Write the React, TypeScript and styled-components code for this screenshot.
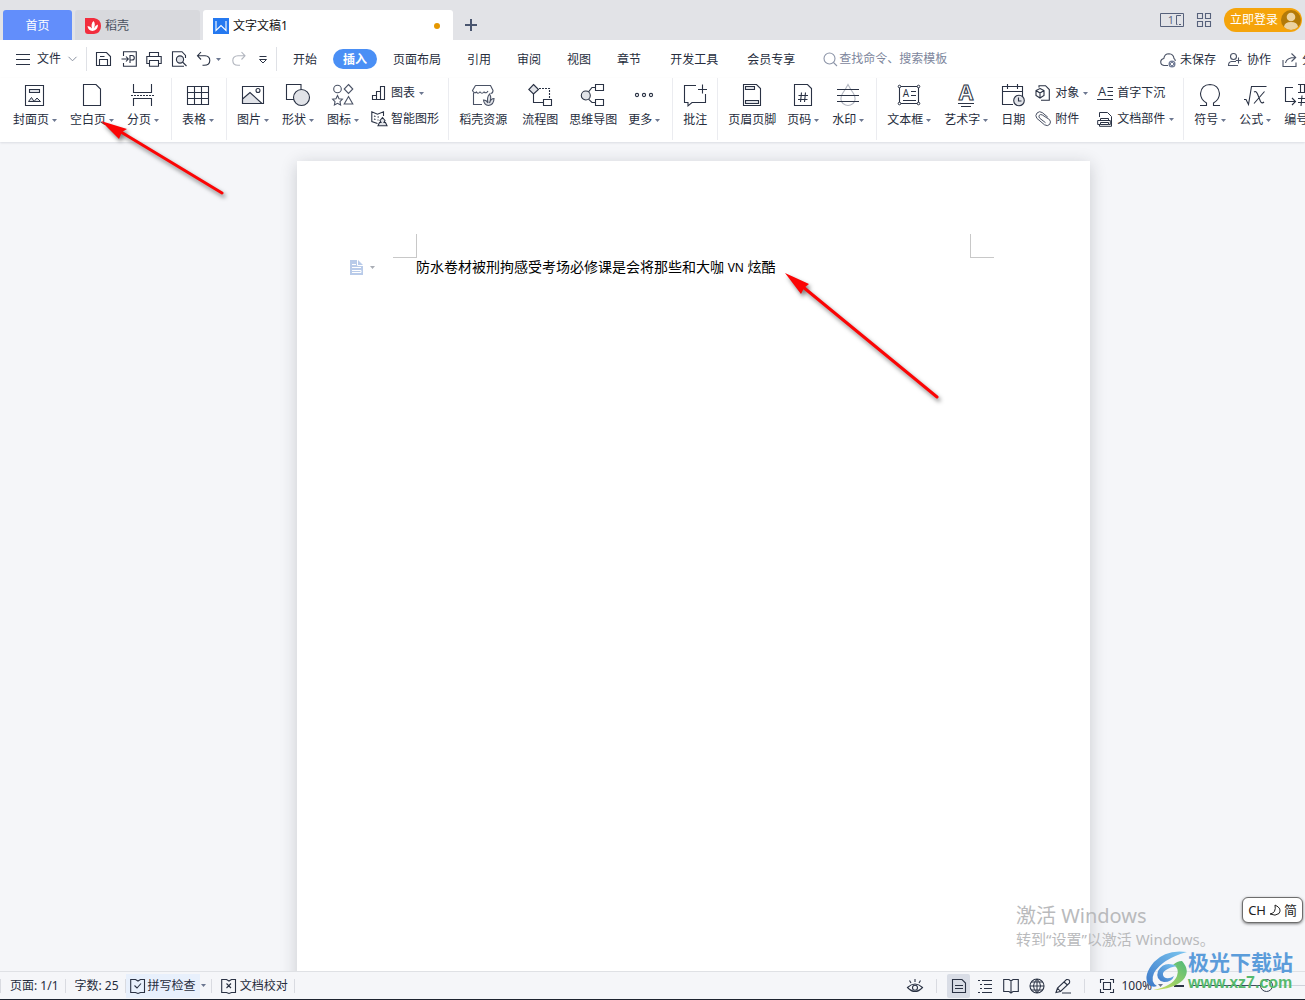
import React from 'react';
import styled, { createGlobalStyle, css } from 'styled-components';

const ink = '#2a3244';
const shade = '#e1e3e8';

const GlobalStyle = createGlobalStyle`
  *, *::before, *::after { box-sizing: border-box; }
  html, body { margin: 0; height: 100%; overflow: hidden; }
  body {
    font-family: "Noto Sans", "Noto Sans CJK SC", sans-serif;
    font-size: 12px;
    line-height: 16px;
    color: #262d3d;
  }
  button, input { font: inherit; color: inherit; }
  svg { display: block; flex: none; overflow: visible; }
`;

const Shell = styled.div`
  position: relative;
  display: flex;
  flex-direction: column;
  height: 100vh;
  overflow: hidden;
  background: #f5f6f9;
`;

const Plain = styled.button`
  display: flex;
  align-items: center;
  flex: none;
  padding: 0;
  border: 0;
  background: none;
  white-space: nowrap;
`;

/* ---------- title bar ---------- */

const TitleBar = styled.header`
  display: flex;
  align-items: flex-end;
  flex: none;
  height: 40px;
  padding: 0 3px;
  background: #e2e3e7;
`;

const DocTab = styled(Plain)<{ $kind: 'home' | 'idle' | 'active' }>`
  gap: 4px;
  height: 30px;
  margin-right: 3px;
  padding: 2px 10px 0;
  border-radius: 3px 3px 0 0;
  ${({ $kind }) =>
    $kind === 'home'
      ? css`width: 69px; justify-content: center; background: #628efb; color: #fff;`
      : $kind === 'idle'
        ? css`width: 125px; background: #d8d9dd; color: #4a5160;`
        : css`width: 250px; margin-right: 0; background: #fff; color: #111;`}
`;

const Unsaved = styled.span`
  width: 6px;
  height: 6px;
  margin: 0 3px 0 auto;
  border-radius: 50%;
  background: #e59700;
`;

const NewTab = styled(Plain)`
  height: 30px;
  padding: 0 12px;
`;

const TitleTools = styled.div`
  display: flex;
  align-items: center;
  gap: 12px;
  height: 40px;
  margin-left: auto;
`;

const Login = styled(Plain)`
  gap: 3px;
  height: 24px;
  padding: 0 1px 0 6px;
  border-radius: 12px;
  background: #f5a40b;
  color: #fff;
`;

/* ---------- menu row ---------- */

const MenuRow = styled.nav`
  display: flex;
  align-items: center;
  flex: none;
  height: 38px;
  padding-left: 16px;
  background: #fff;
`;

const FileButton = styled(Plain)`
  gap: 7px;
  margin-right: 9px;
`;

const MenuRule = styled.span`
  flex: none;
  width: 1px;
  height: 24px;
  background: #dfe1e6;
`;

const QuickTools = styled.div`
  display: flex;
  align-items: center;
  gap: 9px;
  padding: 0 5px 0 9px;
`;

const QuickButton = styled(Plain)`
  gap: 4px;
`;

const Tabs = styled.div<{ $gap: number }>`
  display: flex;
  flex: none;
  gap: ${({ $gap }) => $gap}px;
  padding-left: ${({ $gap }) => $gap}px;
`;

const MenuTab = styled(Plain)<{ $on?: boolean }>`
  height: 20px;
  padding: 2px 10px 0;
  border-radius: 10px;
  ${({ $on }) => $on && css`background: #4a8ff5; color: #fff; font-weight: 700;`}
`;

const Search = styled.label`
  display: flex;
  align-items: center;
  gap: 1px;
  flex: none;
  margin-left: 18px;
`;

const SearchInput = styled.input`
  width: 130px;
  padding: 0;
  border: 0;
  outline: 0;
  background: none;
  &::placeholder { color: #7d869c; opacity: 1; }
`;

const ShareTools = styled.div`
  display: flex;
  flex: none;
  gap: 11px;
  margin: 0 -21px 0 auto;
`;

const ShareButton = styled(Plain)`
  gap: 4px;
  padding-top: 2px;
`;

/* ---------- ribbon ---------- */

const Ribbon = styled.section`
  position: relative;
  display: flex;
  align-items: flex-start;
  gap: 11px;
  flex: none;
  height: 64px;
  padding-left: 13px;
  background: #fff;
  box-shadow: 0 1px 2px rgba(40, 50, 70, 0.12);
`;

const Tool = styled.button<{ $menu?: boolean; $lead?: boolean }>`
  display: flex;
  flex-direction: column;
  align-items: center;
  gap: 5px;
  flex: none;
  margin: 5px ${({ $menu }) => ($menu ? 2 : 0)}px 0 ${({ $lead }) => ($lead ? 4 : 0)}px;
  padding: 0;
  border: 0;
  background: none;
  white-space: nowrap;
`;

const ToolLabel = styled.span`
  display: flex;
  align-items: center;
  gap: 3px;
`;

const RibbonRule = styled.span`
  flex: none;
  width: 1px;
  height: 62px;
  margin: 0 -1px;
  background: #ebecf0;
`;

const ToolStack = styled.div`
  display: flex;
  flex-direction: column;
  align-items: flex-start;
  gap: 10px;
  flex: none;
  margin: 7px -1px 0;
`;

const SmallTool = styled(Plain)`
  gap: 4px;
`;

/* ---------- workspace ---------- */

const Workspace = styled.main`
  display: flex;
  justify-content: center;
  flex: 1;
  min-height: 0;
  padding: 19px 0 0 82px;
  overflow: hidden;
`;

const Page = styled.article`
  flex: none;
  width: 793px;
  height: 1122px;
  padding-top: 73px;
  background: #fff;
  box-shadow: 0 3px 16px rgba(30, 35, 45, 0.2);
`;

const MarginMarks = styled.div`
  display: flex;
  justify-content: space-between;
  padding: 0 96px;
`;

const Mark = styled.span<{ $side: 'left' | 'right' }>`
  width: 24px;
  height: 24px;
  border: 0 solid #c8c8c8;
  border-bottom-width: 1px;
  ${({ $side }) => ($side === 'left' ? css`border-right-width: 1px;` : css`border-left-width: 1px;`)}
`;

const Line = styled.div`
  display: grid;
  grid-template-columns: 66px 1fr;
  align-items: center;
  height: 18px;
  padding: 0 96px 0 53px;
`;

const ParagraphMenu = styled(Plain)`
  gap: 7px;
`;

const Paragraph = styled.p`
  margin: 0;
  font-size: 14px;
  line-height: 18px;
  color: #000;
`;

const Latin = styled.span`
  font-size: 12px;
`;

/* ---------- status bar ---------- */

const StatusBar = styled.footer`
  position: relative;
  display: flex;
  align-items: center;
  flex: none;
  height: 29px;
  border-top: 1px solid #dfe1e5;
  border-bottom: 1px solid #1d2430;
  background: #f5f6f9;
`;

const StatusRule = styled.span`
  flex: none;
  width: 1px;
  height: 14px;
  background: #d9dbe1;
`;

const StatusText = styled(Plain)`
  gap: 3px;
  padding: 0 6px 0 9px;
`;

const StatusTool = styled(Plain)`
  gap: 2px;
  height: 24px;
  padding: 0 4px;
  background: #e8f0fc;
`;

const StatusCaret = styled(Plain)`
  padding: 0 5px 0 1px;
`;

const ViewTools = styled.div`
  display: flex;
  align-items: center;
  gap: 3px;
  margin-left: auto;
`;

const ViewRule = styled(StatusRule)`
  margin: 0 7px;
`;

const ViewButton = styled(Plain)<{ $on?: boolean }>`
  justify-content: center;
  width: 23px;
  height: 24px;
  border-radius: 2px;
  background: ${({ $on }) => ($on ? '#d9dde6' : 'none')};
`;

const ZoomTools = styled.div`
  display: flex;
  align-items: center;
  gap: 7px;
  padding-left: 8px;
`;

const ZoomLevel = styled(Plain)`
  gap: 6px;
  margin-right: 4px;
`;

const ZoomSlider = styled.input`
  width: 114px;
  height: 14px;
  margin: 0;
  appearance: none;
  background: linear-gradient(90deg, #3f4a60 0 66%, #cfd3db 66% 100%) center / 100% 1px no-repeat;
  &::-webkit-slider-thumb {
    appearance: none;
    width: 13px;
    height: 13px;
    border: 1px solid #333c4e;
    border-radius: 50%;
    background: #f5f6f9;
  }
`;

/* ---------- floating layers ---------- */

const Arrows = styled.svg`
  position: absolute;
  top: 0;
  left: 0;
  pointer-events: none;
  filter: drop-shadow(2px 3px 2px rgba(0, 0, 0, 0.5));
`;

const Activation = styled.aside`
  position: absolute;
  right: 0;
  bottom: 50px;
  width: 289px;
  color: #b9babc;
  white-space: nowrap;
  pointer-events: none;
`;

const ActivationTitle = styled.div`
  font-size: 20px;
  line-height: 24px;
`;

const ActivationHint = styled.div`
  font-size: 15px;
  line-height: 22px;
`;

const InputBadge = styled.aside`
  position: absolute;
  right: 2px;
  bottom: 77px;
  display: flex;
  align-items: center;
  gap: 3px;
  height: 26px;
  padding: 0 5px;
  border: 1px solid #6d6d6d;
  border-radius: 6px;
  background: #fff;
  box-shadow: 0 1px 3px rgba(0, 0, 0, 0.5);
  color: #222;
  font-size: 13px;
`;

const SiteMark = styled.aside`
  position: absolute;
  right: 0;
  bottom: 8px;
  display: flex;
  align-items: center;
  gap: 1px;
  width: 159px;
  pointer-events: none;
`;

const SiteName = styled.div`
  color: #5b9cda;
  font-size: 21px;
  font-weight: 700;
  line-height: 24px;
`;

const SiteUrl = styled.div`
  color: #55b96d;
  font-family: "Liberation Sans", Arial, sans-serif;
  font-size: 16px;
  font-weight: 700;
  line-height: 18px;
`;

/* ---------- drawings ---------- */

type IconProps = { w?: number; h?: number; color?: string; box?: string; children: React.ReactNode };

const Icon = ({ w = 24, h = w, color = ink, box, children }: IconProps) => (
  <svg width={w} height={h} viewBox={box ?? `0 0 ${w} ${h}`} fill="none" stroke={color} strokeWidth="1.1" aria-hidden="true">
    {children}
  </svg>
);

const Caret = ({ color = '#6c7790' }: { color?: string }) => (
  <svg width="5" height="3" viewBox="0 0 5 3" aria-hidden="true"><path d="M0 0H5L2.5 3Z" fill={color} /></svg>
);

const letter = { fill: ink, stroke: 'none', fontFamily: 'Open Sans, sans-serif', textAnchor: 'middle' as const };

const icons = {
  cover: <Icon><path d="M2.5 2.5H20.5V22.5H2.5Z" /><path d="M6.5 6.5H16.5V9.5H6.5Z" fill={shade} /><path d="M5.5 18.5L8.5 14.5L11 18.5ZM11 18.5L14 15L17.5 18.5Z" fill={shade} strokeWidth="1" /></Icon>,
  blank: <Icon><path d="M3.5 1.5H16L20.5 6V22.5H3.5Z" /></Icon>,
  pageBreak: <Icon><path d="M2.5 1V9.5H20.5V1M2.5 23V15.5H20.5V23" /><path d="M0 12.5H24" strokeDasharray="2 1" /></Icon>,
  table: <Icon><path d="M1.5 3.5H22.5V21.5H1.5ZM1.5 9.5H22.5M1.5 15.5H22.5M8.5 3.5V21.5M15.5 3.5V21.5" /></Icon>,
  picture: <Icon><path d="M1.5 16L9 9.5L21 20.5H1.5Z" fill={shade} /><path d="M1.5 3.5H22.5V20.5H1.5Z" /><circle cx="17" cy="7.5" r="2" /></Icon>,
  shapes: <Icon><path d="M.5 1.5H15V16.5H.5Z" /><circle cx="15.5" cy="14.5" r="8" fill={shade} /></Icon>,
  symbols: <Icon color="#4a5265"><circle cx="6.5" cy="6" r="3.8" /><path d="M17.5 1.5L21.8 6L17.5 10.5L13.2 6Z" /><path d="M6.5 12.5L8 15.8L11.4 16.2L9 18.7L9.6 22L6.5 20.3L3.4 22L4 18.7L1.6 16.2L5 15.8Z" /><path d="M17.5 13.5L21.8 21H13.2Z" /></Icon>,
  chart: <Icon w={16}><path d="M1.5 10.5H5.5V14.5H1.5ZM5.5 6.5H9.5V14.5H5.5ZM9.5 1.5H13.5V14.5H9.5Z" /></Icon>,
  smart: <Icon w={16}><path d="M6.5 12.5L.8 10.5V.8L6.5 3.2L12.5 .8V5M3 5L4.5 5.5M3 8L4.5 8.5M6.5 6L8 6M6.5 9L7.5 9" /><path d="M7 14.8L8.5 11.5H10L9 9.5L11.5 6.5L14 9.5L13 11.5H14.5L16 14.8Z" fill={shade} /></Icon>,
  store: <Icon color="#4a5265"><path d="M2.5 10V21.5H11M4.5 2.5H19.5L22 7.5Q22 10.5 19.5 10.5M17 8Q15.5 11 13 9Q11 11.5 9 9Q7 11.5 5.5 9Q3 11 1.5 7.5L4.5 2.5" /><path d="M17.5 22.5Q13 22 12.5 17Q15.5 17 17 20Q15.5 14.5 18.5 11Q21 14.5 18.5 20Q20 15.5 23 15.5Q23 21.5 17.5 22.5Z" fill={shade} /></Icon>,
  flow: <Icon><path d="M5.5 1.5L10.5 6.5L5.5 11L.8 6.5Z" fill={shade} /><path d="M5.5 11V19.5H15.5M15.5 16.5H23.5V22.5H15.5Z" /><path d="M11 5.5H21.5V16" strokeDasharray="2 1" /></Icon>,
  mind: <Icon><circle cx="4.8" cy="12.5" r="4.5" fill={shade} /><path d="M14.5 1.5H22.5V7.5H14.5ZM14.5 16.5H22.5V22.5H14.5ZM14.5 4.5H11L7.5 8.8M14.5 19.5H11L7.5 16.2" /></Icon>,
  more: <Icon><circle cx="5" cy="12" r="1.6" /><circle cx="12" cy="12" r="1.6" /><circle cx="19" cy="12" r="1.6" /></Icon>,
  comment: <Icon><path d="M13 2.5H1.5V19.5H5V22.8L9 19.5H22.5V11M19.5 1.5V10.5M15 6.5H24" /></Icon>,
  header: <Icon><path d="M3.5 1.5H16.5L20.5 5.5V22.5H3.5Z" /><path d="M5.5 3.5H14.5V6.5H5.5ZM5.5 17.5H18.5V20.5H5.5Z" fill={shade} /></Icon>,
  number: <Icon><path d="M3.5 1.5H16.5L20.5 5.5V22.5H3.5Z" /><path d="M10.5 9.5L9.5 19M14.5 9.5L13.5 19M7.5 12.5H17M7 16.5H16.5" /></Icon>,
  water: <Icon><path d="M12 1.5Q14 5.5 17.5 10.5Q21 16.5 17 20.5Q12 24.5 7 20.5Q3 16.5 6.5 10.5Q10 5.5 12 1.5Z" stroke="#b4b8c2" /><path d="M1 6.5H23M1 12.5H23M1 18.5H23" /></Icon>,
  textBox: <Icon><path d="M2.5 3.5H21.5V20.5H2.5ZM14 8.5H19M14 12.5H19M6 17.5H19" /><g fill="#fff" strokeWidth="1"><circle cx="2.5" cy="3.5" r="1.3" /><circle cx="21.5" cy="3.5" r="1.3" /><circle cx="2.5" cy="20.5" r="1.3" /><circle cx="21.5" cy="20.5" r="1.3" /></g><text x="9" y="14" fontSize="10" {...letter}>A</text></Icon>,
  wordArt: <Icon><text x="12" y="17" fontSize="21" {...letter} fill="#fff" stroke={ink} strokeWidth="1" fontWeight="700">A</text><path d="M4 20.5H20M7 23.5H17" /></Icon>,
  date: <Icon><path d="M12 21.5H1.5V3.5H21.5V13M1.5 8.5H21.5M6.5 1V6M16.5 1V6" /><circle cx="18" cy="17.5" r="5.3" fill={shade} /><path d="M17.5 14.5V18H20.5" /></Icon>,
  object: <Icon w={16}><path d="M4 2.5V.7H10.5L14.3 4.5V15.3H6" /><path d="M5 3.5L9 5.5V10.5L5 13L1 10.5V5.5ZM1 5.5L5 8L9 5.5M5 8V13" /></Icon>,
  clip: <Icon w={16} color="#4a5265"><path d="M12.8 6.2L7.3 1.6Q4.5 -.4 2 2Q-.2 4.6 1.8 7.3L9.5 13.8Q12.5 15.7 14.7 13.4Q16.4 10.8 14.5 8.6L7.2 3.9Q5.3 3 4.2 4.4Q3.4 6 4.8 7.3L10.5 11.7" strokeWidth="1" /></Icon>,
  dropCap: <Icon w={16}><path d="M10.5 2.5H16M10.5 6.5H16M10.5 10.5H16M0 14.5H16" /><text x="5" y="11" fontSize="13" {...letter}>A</text></Icon>,
  parts: <Icon w={16}><path d="M2.5 6V1.5H10.5L14.5 5.5V15.3H2.5V13.5M3.5 9.5V7.5H11.5V9.5M.7 9.5H13.3V13.5H11.5M3.5 13.5H.7V9.5M3.5 11.5H11.5V13.5H3.5Z" strokeWidth="1" /></Icon>,
  omega: <Icon><path d="M2 22.5H8.5V20Q2.5 16.5 2.5 10.5Q3.5 1.7 12 1.5Q20.5 1.7 21.5 10.5Q21.5 16.5 15.5 20V22.5H22" /></Icon>,
  formula: <Icon><path d="M1 16.5H3L5.5 21.5L8.5 3.5H23.5M11 9Q13 7.5 14.5 11L17.5 18.5Q19 21 21 19M21.5 8.5L11 20.5" /></Icon>,
  numbering: <Icon w={32} h={24} box="0 4 32 24"><path d="M9 8.5H1.5V22.5H11M8 19L11.5 22.5L8 26M14 5.5H30M16.5 5.5V13.5M20.5 5.5V13.5M24.5 5.5V13.5M14 13.5H30M18 16.5L17 27M23 16.5L22 27M14 19.5H30M14 23.5H30" /></Icon>,
};

const Ic = {
  menu: <Icon w={14}><path d="M0 2.5H14M0 7.5H14M0 12.5H14" strokeWidth="1" /></Icon>,
  chevron: <Icon w={9} h={6} color="#8a91a0"><path d="M.5 .8L4.5 4.8L8.5 .8" strokeWidth="1" /></Icon>,
  save: <Icon w={16}><path d="M.5 1.5H10.5L14.5 5.5V14.5H.5ZM3.5 14V8.5H11.5V14M4 5.5H8.5" /></Icon>,
  pdf: <Icon w={16}><path d="M2.5 5V.7H15.3V15.3H2.5V12M.5 8H7M5 5.5L7.3 8L5 10.5M9 12V4.5H11Q13.3 4.5 13.3 7Q13.3 9 11 9H9" /></Icon>,
  print: <Icon w={16}><path d="M3.5 5V1.5H12.5V5M3.5 12.5H.8V5.5H15.2V12.5H12.5M3.5 9.5H12.5V15.3H3.5Z" /></Icon>,
  preview: <Icon w={16}><path d="M13 15.3H1.5V.7H11L14.5 4.5V7" /><circle cx="9" cy="8.5" r="3.6" fill={shade} /><path d="M11.5 11L15.5 15" /></Icon>,
  undo: <Icon w={16}><path d="M5 1L1.5 4.8L5 8.5M1.5 4.8H9Q13.8 5 13.8 9.5Q13.8 14.3 8 14.3H6.5" /></Icon>,
  redo: <Icon w={16} color="#b1b5be"><path d="M11.5 1L15 4.8L11.5 8.5M15 4.8H8Q2.8 5 2.8 9.5Q2.8 14.3 8 14.3H10" /></Icon>,
  custom: <Icon w={16}><path d="M4.5 5.5H11.5M4.5 8.5L8 12L11.5 8.5Z" strokeWidth="1" /></Icon>,
  search: <Icon w={15} color="#8d95a8"><circle cx="6.5" cy="6.5" r="5.5" /><path d="M10.5 10.5L14 14" /></Icon>,
  cloud: <Icon w={16} color="#4a5265"><path d="M8 13.5H4Q.7 13 .7 9.8Q.9 7 3.8 6.5Q4.5 1.7 9 1.7Q13.5 2 14 6.5Q15.3 7.3 15.3 9" /><circle cx="12" cy="12" r="3.5" fill="#737d97" stroke="none" /><path d="M10.5 10.5L13.5 13.5M13.5 10.5L10.5 13.5" stroke="#fff" strokeWidth="1" /></Icon>,
  collab: <Icon w={16} color="#4a5265"><circle cx="6.5" cy="4.5" r="3" /><path d="M9 9.5H4.5Q1.5 9.8 1.5 13.5H11M11.5 5.5V11.5M8.8 8.5H14.5" /></Icon>,
  share: <Icon w={16} color="#4a5265"><path d="M1 8V14.5H14V10.5M3.5 11Q4.5 5.5 13.5 5.5M9.5 1.5L13.7 5.5L9.5 9.5" /></Icon>,
  doc: <Icon w={13} h={15}><path d="M0 0H8L13 5V15H0Z" fill="#b9cbe9" stroke="none" /><path d="M7.5 0V5.5H13M2 4.5H6M2 7.5H11M2 10.5H11V12.5H2" stroke="#fff" strokeWidth="1" /></Icon>,
  spell: <Icon w={16}><path d="M.7 1.5H5.5L8 3L10.5 1.5H14.5V14.5H10.5L8 15.5L5.5 14.5H.7ZM4.5 7.5L7 10L11 5.5" /></Icon>,
  proof: <Icon w={16}><path d="M.7 1.5H5.5L8 3L10.5 1.5H14.5V14.5H10.5L8 15.5L5.5 14.5H.7ZM5.5 5.5L10 10M10 5.5L5.5 10" /></Icon>,
  eye: <Icon w={16}><path d="M.5 9.5Q8 2.5 15.5 9.5Q8 17.5 .5 9.5ZM8 1V4M2.5 2.5L4 5M13.5 2.5L12 5" /><circle cx="8" cy="9.8" r="2.5" /></Icon>,
  page: <Icon w={16}><path d="M1.5 1.5H11L14.5 5V14.5H1.5ZM4 7.5H12M4 10.5H12" /></Icon>,
  outline: <Icon w={16}><path d="M1 2.5H3M5 2.5H15M3 6.5H5M7 6.5H15M3 10.5H5M7 10.5H15M1 14.5H3M5 14.5H15" /></Icon>,
  book: <Icon w={16}><path d="M.7 1.5H6L8 3L10 1.5H15.3V13.5H10L8 15L6 13.5H.7ZM8 3V15" /></Icon>,
  globe: <Icon w={16}><circle cx="8" cy="8" r="7" /><path d="M1 8H15M8 1V15M2.5 4H13.5M2.5 12H13.5M8 1Q1 8 8 15M8 1Q15 8 8 15" strokeWidth="1" /></Icon>,
  pen: <Icon w={16}><path d="M1 14.5L2.5 10L11.5 1.5Q15.5 1 14.5 5L5.5 13.5ZM2.5 10L5.5 13.5M9 4L12.5 7M7 15H16" /></Icon>,
  fit: <Icon w={14}><path d="M.5 4V.5H4M10 .5H13.5V4M13.5 10V13.5H10M4 13.5H.5V10M3.5 3.5H10.5V10.5H3.5Z" /></Icon>,
  minus: <Icon w={10}><path d="M0 5H10" strokeWidth="2" /></Icon>,
};

type ToolSpec = { id: keyof typeof icons; label: string; menu?: boolean; lead?: boolean };

const RibbonTool = ({ id, label, menu, lead }: ToolSpec) => (
  <Tool $menu={menu} $lead={lead}>
    {icons[id]}
    <ToolLabel>{label}{menu && <Caret />}</ToolLabel>
  </Tool>
);

const RibbonStack = ({ items }: { items: ToolSpec[] }) => (
  <ToolStack>
    {items.map((t) => (
      <SmallTool key={t.id}>{icons[t.id]}{t.label}{t.menu && <Caret />}</SmallTool>
    ))}
  </ToolStack>
);

type Group = (ToolSpec | ToolSpec[])[];

const groups: Group[] = [
  [{ id: 'cover', label: '封面页', menu: true }, { id: 'blank', label: '空白页', menu: true }, { id: 'pageBreak', label: '分页', menu: true }],
  [{ id: 'table', label: '表格', menu: true }],
  [
    { id: 'picture', label: '图片', menu: true },
    { id: 'shapes', label: '形状', menu: true },
    { id: 'symbols', label: '图标', menu: true },
    [{ id: 'chart', label: '图表', menu: true }, { id: 'smart', label: '智能图形' }],
  ],
  [
    { id: 'store', label: '稻壳资源' },
    { id: 'flow', label: '流程图', lead: true },
    { id: 'mind', label: '思维导图' },
    { id: 'more', label: '更多', menu: true },
  ],
  [{ id: 'comment', label: '批注' }],
  [{ id: 'header', label: '页眉页脚' }, { id: 'number', label: '页码', menu: true }, { id: 'water', label: '水印', menu: true }],
  [
    { id: 'textBox', label: '文本框', menu: true },
    { id: 'wordArt', label: '艺术字', menu: true },
    { id: 'date', label: '日期' },
    [{ id: 'object', label: '对象', menu: true }, { id: 'clip', label: '附件' }],
    [{ id: 'dropCap', label: '首字下沉' }, { id: 'parts', label: '文档部件', menu: true }],
  ],
  [{ id: 'omega', label: '符号', menu: true }, { id: 'formula', label: '公式', menu: true }, { id: 'numbering', label: '编号', menu: true }],
];

const mainTabs = ['开始', '插入', '页面布局', '引用', '审阅', '视图', '章节'];
const extraTabs = ['开发工具', '会员专享'];

export default function App() {
  return (
    <Shell>
      <GlobalStyle />
      <TitleBar>
        <DocTab $kind="home">首页</DocTab>
        <DocTab $kind="idle">
          <svg width="16" height="16" viewBox="0 0 16 16" aria-hidden="true">
            <path d="M0 0H9Q16 1 16 8Q16 15 9 16H3Q0 16 0 13Z" fill="#f22d3d" />
            <path d="M7.5 13Q3 12.5 2.5 8Q5.5 8 7 10.5Q5.5 6 8.5 3Q11 6 8.8 10.5Q10.5 7 13 6.5Q13 12 7.5 13Z" fill="#fff" />
          </svg>
          稻壳
        </DocTab>
        <DocTab $kind="active">
          <svg width="16" height="16" viewBox="0 0 16 16" aria-hidden="true">
            <path d="M0 0H16V16H0Z" fill="#2579f0" />
            <path d="M3 3V12.5L8 7.5L13 12.5V3" fill="none" stroke="#fff" strokeWidth="1.1" />
          </svg>
          文字文稿1
          <Unsaved />
        </DocTab>
        <NewTab aria-label="新建"><Icon w={12} color="#49556f"><path d="M6 0V12M0 6H12" strokeWidth="2" /></Icon></NewTab>
        <TitleTools>
          <Plain aria-label="窗口">
            <Icon w={24} h={16} color="#56617b"><path d="M.5 1.5H23.5V14.5H.5ZM21 3.5H16.5V12.5H17.5M19 12.5H21" strokeWidth="1" /><text x="11" y="12" fontSize="11" {...letter} fill="#56617b">1</text></Icon>
          </Plain>
          <Plain aria-label="应用">
            <Icon w={16} color="#56617b"><path d="M1.5 1.5H6.5V6.5H1.5ZM9.5 1.5H14.5V6.5H9.5ZM1.5 9.5H6.5V14.5H1.5ZM9.5 9.5H14.5V14.5H9.5Z" /></Icon>
          </Plain>
          <Login>
            立即登录
            <svg width="20" height="20" viewBox="0 0 20 20" aria-hidden="true">
              <circle cx="10" cy="10" r="10" fill="#b37a08" />
              <circle cx="10" cy="7" r="4.3" fill="#ecd3a1" />
              <path d="M3 17Q3.5 12 10 12Q16.5 12 17 17Q14 20 10 20Q6 20 3 17Z" fill="#ecd3a1" />
            </svg>
          </Login>
        </TitleTools>
      </TitleBar>

      <MenuRow>
        <FileButton>{Ic.menu}文件{Ic.chevron}</FileButton>
        <MenuRule />
        <QuickTools>
          <QuickButton aria-label="保存">{Ic.save}</QuickButton>
          <QuickButton aria-label="输出为PDF">{Ic.pdf}</QuickButton>
          <QuickButton aria-label="打印">{Ic.print}</QuickButton>
          <QuickButton aria-label="打印预览">{Ic.preview}</QuickButton>
          <QuickButton aria-label="撤销">{Ic.undo}<Caret /></QuickButton>
          <QuickButton aria-label="恢复">{Ic.redo}</QuickButton>
          <QuickButton aria-label="自定义">{Ic.custom}</QuickButton>
        </QuickTools>
        <MenuRule />
        <Tabs $gap={6}>
          {mainTabs.map((t) => <MenuTab key={t} $on={t === '插入'}>{t}</MenuTab>)}
        </Tabs>
        <Tabs $gap={9}>
          {extraTabs.map((t) => <MenuTab key={t}>{t}</MenuTab>)}
        </Tabs>
        <Search>
          {Ic.search}
          <SearchInput type="text" aria-label="查找命令" placeholder="查找命令、搜索模板" />
        </Search>
        <ShareTools>
          <ShareButton>{Ic.cloud}未保存</ShareButton>
          <ShareButton>{Ic.collab}协作</ShareButton>
          <ShareButton>{Ic.share}分享</ShareButton>
        </ShareTools>
      </MenuRow>

      <Ribbon>
        {groups.map((group, i) => (
          <React.Fragment key={i}>
            {i > 0 && <RibbonRule />}
            {group.map((t, j) => (Array.isArray(t) ? <RibbonStack key={j} items={t} /> : <RibbonTool key={j} {...t} />))}
          </React.Fragment>
        ))}
      </Ribbon>

      <Workspace>
        <Page>
          <MarginMarks><Mark $side="left" /><Mark $side="right" /></MarginMarks>
          <Line>
            <ParagraphMenu aria-label="段落">{Ic.doc}<Caret color="#a9adb5" /></ParagraphMenu>
            <Paragraph>防水卷材被刑拘感受考场必修课是会将那些和大咖 <Latin>VN</Latin> 炫酷</Paragraph>
          </Line>
        </Page>
      </Workspace>

      <StatusBar>
        <StatusRule />
        <StatusText>页面: 1/1</StatusText>
        <StatusRule />
        <StatusText>字数: 25</StatusText>
        <StatusRule />
        <StatusTool>{Ic.spell}拼写检查</StatusTool>
        <StatusCaret aria-label="拼写检查选项"><Caret /></StatusCaret>
        <StatusRule />
        <StatusText>{Ic.proof}文档校对</StatusText>
        <StatusRule />
        <ViewTools>
          <ViewButton aria-label="护眼模式">{Ic.eye}</ViewButton>
          <ViewRule />
          <ViewButton $on aria-label="页面视图">{Ic.page}</ViewButton>
          <ViewButton aria-label="大纲">{Ic.outline}</ViewButton>
          <ViewButton aria-label="阅读版式">{Ic.book}</ViewButton>
          <ViewButton aria-label="Web版式">{Ic.globe}</ViewButton>
          <ViewButton aria-label="写作模式">{Ic.pen}</ViewButton>
          <ViewRule />
        </ViewTools>
        <ZoomTools>
          <Plain aria-label="最佳显示比例">{Ic.fit}</Plain>
          <ZoomLevel>100%<Caret /></ZoomLevel>
          <Plain aria-label="缩小">{Ic.minus}</Plain>
          <ZoomSlider type="range" aria-label="显示比例" defaultValue={68} />
        </ZoomTools>
      </StatusBar>

      <Arrows width="960" height="420" viewBox="0 0 960 420" fill="#fb0505" aria-hidden="true">
        <path d="M121 132L222 193M803 287L937 397" stroke="#fb0505" strokeWidth="3" strokeLinecap="round" />
        <path d="M101 121L127 129L122 132L119 139ZM785 273L809 284L804 288L801 294Z" />
      </Arrows>

      <Activation>
        <ActivationTitle>激活 Windows</ActivationTitle>
        <ActivationHint>转到“设置”以激活 Windows。</ActivationHint>
      </Activation>

      <InputBadge>
        CH
        <Icon w={12} color="#222"><path d="M6 1Q13.5 4.5 10 9.5Q6.5 12.5 1 10Q7.5 9 6 1Z" strokeWidth="1" /></Icon>
        简
      </InputBadge>

      <SiteMark>
        <svg width="41" height="41" viewBox="0 0 41 41" aria-hidden="true">
          <defs>
            <linearGradient id="swirlBlue" x1="0" y1="1" x2="1" y2="0"><stop offset="0" stopColor="#3c79c9" /><stop offset="1" stopColor="#7cc6f0" /></linearGradient>
            <linearGradient id="swirlGreen" x1="1" y1="0" x2="0" y2="1"><stop offset="0" stopColor="#4fb978" /><stop offset="1" stopColor="#cfe05a" /></linearGradient>
          </defs>
          <path d="M41 1Q20 -2 8 11Q-3 24 2 33Q6 37 11 35Q4 31 8 22Q16 8 41 1Z" fill="url(#swirlBlue)" />
          <path d="M36 10Q45 20 37 29Q28 38 7 39Q27 35 31 25Q34 17 27 14Q31 10 36 10Z" fill="url(#swirlGreen)" />
          <path d="M31 15Q18 9 12 20Q9 29 18 31Q26 31 28 25Q22 29 18 26Q15 22 20 19Q24 16 31 15Z" fill="url(#swirlBlue)" />
        </svg>
        <div>
          <SiteName>极光下载站</SiteName>
          <SiteUrl>www.xz7.com</SiteUrl>
        </div>
      </SiteMark>
    </Shell>
  );
}
